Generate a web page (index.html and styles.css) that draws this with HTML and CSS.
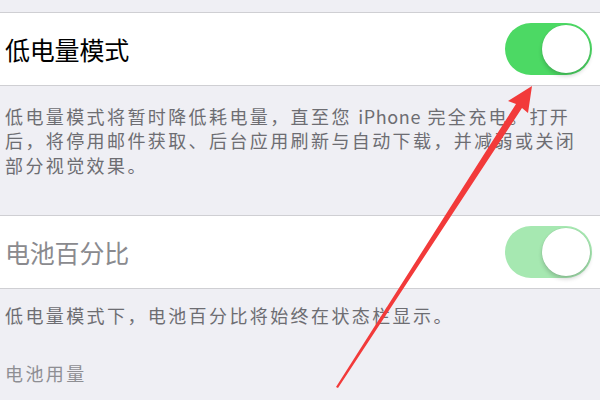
FILE: index.html
```html
<!DOCTYPE html>
<html lang="zh-CN">
<head>
  <meta charset="UTF-8">
  <title>电池</title>
  <meta name="viewport" content="width=device-width,initial-scale=1.0">
  <link rel="stylesheet" href="styles.css">
</head>
<body class="page">
  <section class="group group--first">
    <div class="cell">
      <span class="cell__title">低电量模式</span>
      <span class="switch switch--on"><span class="switch__knob"></span></span>
    </div>
    <p class="group__footer">低电量模式将暂时降低耗电量，直至您 <span class="latin">iPhone</span> 完全充电。打开<br>后，将停用邮件获取、后台应用刷新与自动下载，并减弱或关闭<br>部分视觉效果。</p>
  </section>

  <section class="group group--second">
    <div class="cell cell--disabled">
      <span class="cell__title">电池百分比</span>
      <span class="switch switch--on switch--disabled"><span class="switch__knob"></span></span>
    </div>
    <p class="group__footer group__footer--short">低电量模式下，电池百分比将始终在状态栏显示。</p>
  </section>

  <h2 class="group__header">电池用量</h2>

  <svg class="arrow" width="600" height="400" viewBox="0 0 600 400">
    <polygon points="532,86 508,101 516,104 336,387 338,388 522,108 528,113" fill="#f23a3a"/>
  </svg>
</body>
</html>
```

FILE: styles.css
```css
*, *::before, *::after {
  box-sizing: border-box;
}

html, body {
  margin: 0;
  padding: 0;
}

.page {
  position: relative;
  width: 600px;
  height: 400px;
  overflow: hidden;
  background: #efeff4;
  font-family: "Noto Sans CJK SC", "Noto Sans", sans-serif;
  color: #000;
}

.group--first {
  padding-top: 12px;
}

.group--second {
  padding-top: 38px;
}

.cell {
  display: flex;
  align-items: center;
  justify-content: space-between;
  height: 74px;
  padding: 0 8px 0 5px;
  background: #fff;
  border-top: 1px solid #cfcfd3;
  border-bottom: 1px solid #cfcfd3;
}

.cell__title {
  font-size: 25px;
  line-height: 30px;
  letter-spacing: -0.2px;
}

.cell--disabled .cell__title {
  color: #8a8a8e;
}

.switch {
  display: flex;
  align-items: center;
  width: 87px;
  height: 52px;
  padding: 2px;
  border-radius: 26px;
  background: #e5e5ea;
}

.switch--on {
  justify-content: flex-end;
  background: #4cd964;
}

.switch--disabled {
  background: #a6e8b1;
}

.switch__knob {
  width: 48px;
  height: 48px;
  border-radius: 50%;
  background: #fff;
  box-shadow: 0 3px 4px rgba(0, 0, 0, 0.18), 0 0 0 0.5px rgba(0, 0, 0, 0.06);
}

.group__footer {
  margin: 0;
  padding: 18px 0 0 5px;
  font-size: 18px;
  line-height: 24.3px;
  letter-spacing: 2.4px;
  color: #6d6d72;
}

.latin {
  letter-spacing: 0.6px;
}

.group__footer--short {
  padding-top: 14px;
}

.group__header {
  margin: 0;
  padding: 34px 0 0 5px;
  font-size: 18px;
  font-weight: normal;
  line-height: 24px;
  letter-spacing: 2.4px;
  color: #8e8e93;
}

.arrow {
  position: absolute;
  top: 0;
  left: 0;
  pointer-events: none;
}
```
